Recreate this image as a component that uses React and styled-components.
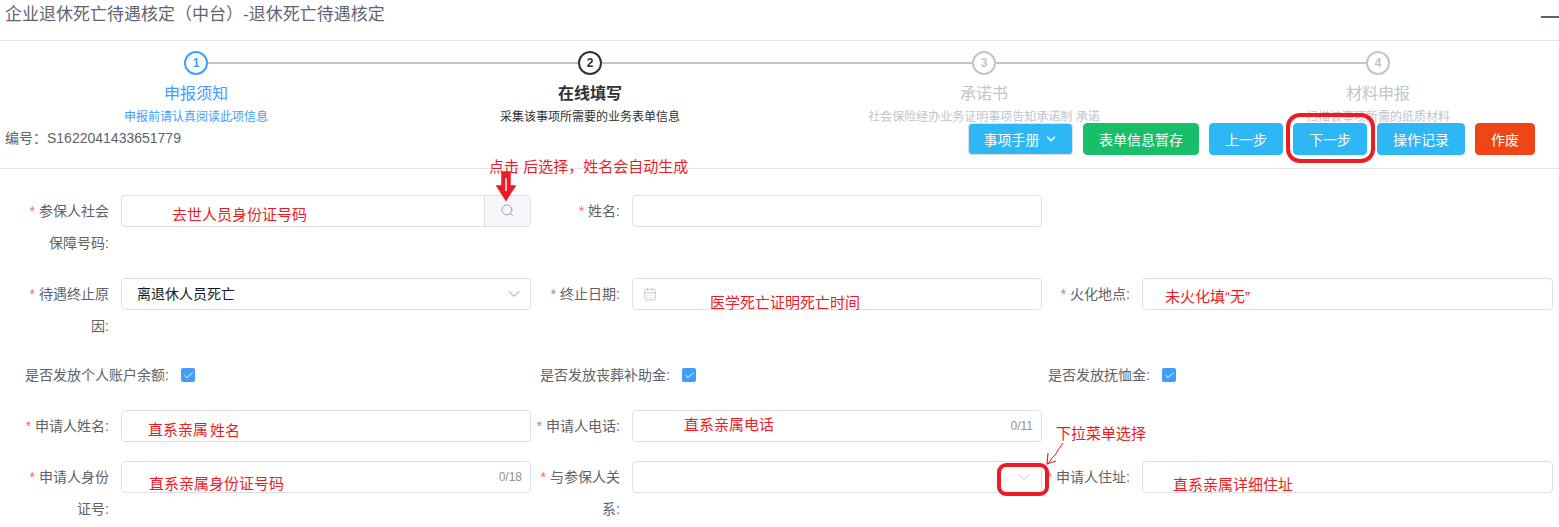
import React from 'react';
import styled, { createGlobalStyle } from 'styled-components';
import { CalendarDays, Check, ChevronDown, Search } from 'lucide-react';

const GlobalStyle = createGlobalStyle`
  html, body {
    margin: 0;
    padding: 0;
    background: #fff;
  }
  body {
    font-family: "Liberation Sans", "Noto Sans CJK SC", sans-serif;
    font-size: 14px;
    color: #606266;
  }
`;

const Page = styled.div`
  position: relative;
  width: 1559px;
  height: 527px;
  overflow: hidden;
  background: #fff;
`;

const TitleBar = styled.header`
  display: flex;
  justify-content: space-between;
  box-sizing: border-box;
  height: 41px;
  padding-left: 5px;
  border-bottom: 1px solid #e6e6e6;
`;

const Title = styled.h1`
  margin: 0;
  font-size: 17px;
  font-weight: 400;
  line-height: 29px;
  color: #5f6470;
`;

const Minimize = styled.span`
  width: 18px;
  height: 2px;
  margin-top: 16px;
  background: #5a6478;
`;

const Head = styled.section`
  box-sizing: border-box;
  height: 128px;
  padding-top: 10px;
  border-bottom: 1px solid #e6e6e6;
`;

const Steps = styled.div`
  display: flex;
  margin-left: -1px;
`;

const stepColor = { done: '#409eff', current: '#303133', wait: '#c0c4cc' };

const Step = styled.div`
  position: relative;
  flex: 0 0 394px;
  display: flex;
  flex-direction: column;
  align-items: center;
  color: ${(p) => stepColor[p.$state]};

  &:not(:last-child)::after {
    content: '';
    position: absolute;
    top: 11px;
    left: 209px;
    width: 370px;
    height: 2px;
    background: #c0c4d0;
  }
`;

const Circle = styled.span`
  display: flex;
  align-items: center;
  justify-content: center;
  box-sizing: border-box;
  width: 24px;
  height: 24px;
  border: 2px solid ${(p) => stepColor[p.$state]};
  border-radius: 50%;
  font-size: 12px;
  font-weight: 700;
`;

const StepTitle = styled.div`
  margin-top: 7px;
  font-size: 16px;
  line-height: 24px;
  font-weight: ${(p) => (p.$state === 'current' ? 700 : 400)};
`;

const StepDesc = styled.div`
  margin-top: 2px;
  font-size: 12px;
  line-height: 18px;
  white-space: nowrap;
`;

const MetaRow = styled.div`
  position: relative;
  display: flex;
  justify-content: space-between;
  margin-top: -3px;
  padding: 0 24px 0 5px;
`;

const Serial = styled.div`
  margin-top: 5px;
  line-height: 20px;
  color: #606266;
`;

const Actions = styled.div`
  display: flex;
  gap: 10px;
`;

const actionColor = { info: '#2db7f5', success: '#19be6b', danger: '#f04516' };

const Action = styled.button`
  display: flex;
  align-items: center;
  justify-content: center;
  gap: 4px;
  box-sizing: border-box;
  width: ${(p) => p.$width}px;
  height: 32px;
  padding: 0;
  border: 1px solid ${(p) => (p.$outlined ? '#dcdee2' : actionColor[p.$kind])};
  border-radius: 4px;
  background: ${(p) => actionColor[p.$kind]};
  color: #fff;
  font: inherit;
  font-size: 14px;
`;

const Form = styled.form`
  padding: 26px 6px 0 21px;
`;

const Row = styled.div`
  display: grid;
  grid-template-columns: 511px 510px 511px;
  margin-top: ${(p) => p.$top ?? 19}px;

  &:first-child {
    margin-top: 0;
  }
`;

const Field = styled.div`
  display: flex;
  align-items: flex-start;

  &:first-child {
    padding-right: 1px;
  }
`;

const Label = styled.label`
  flex: 0 0 ${(p) => p.$width ?? 100}px;
  box-sizing: border-box;
  padding-right: 12px;
  text-align: right;
  line-height: 32px;
  color: #606266;
`;

const Star = styled.span`
  margin-right: 4px;
  color: #f56c6c;
  font-family: "Liberation Sans", sans-serif;
`;

const Box = styled.div`
  flex: 1;
  display: flex;
  align-items: center;
  justify-content: space-between;
  box-sizing: border-box;
  height: 32px;
  padding: ${(p) => p.$padding ?? '0 8px'};
  border: 1px solid #dcdfe6;
  border-radius: 4px;
  background: #fff;
`;

const SelectValue = styled.span`
  margin-top: -3px;
  color: #1a1a1a;
`;

const Group = styled.div`
  flex: 1;
  display: flex;
  height: 32px;
`;

const GroupInput = styled.div`
  flex: 1;
  box-sizing: border-box;
  border: 1px solid #dcdfe6;
  border-right: 0;
  border-radius: 4px 0 0 4px;
`;

const GroupAppend = styled.div`
  display: flex;
  align-items: center;
  justify-content: center;
  box-sizing: border-box;
  width: 47px;
  padding-bottom: 2px;
  border: 1px solid #dcdfe6;
  border-radius: 0 4px 4px 0;
  background: #f5f7fa;
  color: #909399;
`;

const Counter = styled.span`
  margin-left: auto;
  font-size: 12px;
  color: #909399;
`;

const Tick = styled.span`
  display: flex;
  align-items: center;
  justify-content: center;
  width: 14px;
  height: 14px;
  margin-top: 9px;
  border-radius: 2px;
  background: #409eff;
  color: #fff;
`;

const Note = styled.div`
  position: absolute;
  left: ${(p) => p.$x}px;
  top: ${(p) => p.$y}px;
  font-size: 15px;
  line-height: 20px;
  color: #ed1c24;
  white-space: nowrap;
`;

const Ring = styled.div`
  position: absolute;
  left: ${(p) => p.$x}px;
  top: ${(p) => p.$y}px;
  box-sizing: border-box;
  width: ${(p) => p.$w}px;
  height: ${(p) => p.$h}px;
  border: 4px solid #ed1c24;
  border-radius: ${(p) => p.$radius}px;
`;

const Drawing = styled.svg`
  position: absolute;
  left: ${(p) => p.$x}px;
  top: ${(p) => p.$y}px;
`;

const steps = [
  { n: 1, state: 'done', title: '申报须知', desc: '申报前请认真阅读此项信息' },
  { n: 2, state: 'current', title: '在线填写', desc: '采集该事项所需要的业务表单信息' },
  { n: 3, state: 'wait', title: '承诺书', desc: '社会保险经办业务证明事项告知承诺制 承诺' },
  { n: 4, state: 'wait', title: '材料申报', desc: '扫描该事项所需的纸质材料' },
];

const notes = [
  { x: 489, y: 157, text: '点击 后选择，姓名会自动生成' },
  { x: 172, y: 205, text: '去世人员身份证号码' },
  { x: 710, y: 293, text: '医学死亡证明死亡时间' },
  { x: 1165, y: 287, text: '未火化填“无”' },
  { x: 148, y: 420, text: '直系亲属' },
  { x: 210, y: 421, text: '姓名' },
  { x: 684, y: 415, text: '直系亲属电话' },
  { x: 149, y: 474, text: '直系亲属身份证号码' },
  { x: 1056, y: 424, text: '下拉菜单选择' },
  { x: 1173, y: 475, text: '直系亲属详细住址' },
];

const Req = ({ children, width }) => (
  <Label $width={width}>
    <Star>*</Star>
    {children}
  </Label>
);

const CheckField = ({ label, width }) => (
  <Field>
    <Label $width={width}>{label}</Label>
    <Tick>
      <Check size={11} strokeWidth={2} />
    </Tick>
  </Field>
);

const App = () => {
  return (
    <Page>
      <GlobalStyle />
      <TitleBar>
        <Title>企业退休死亡待遇核定（中台）-退休死亡待遇核定</Title>
        <Minimize />
      </TitleBar>

      <Head>
        <Steps>
          {steps.map((s) => (
            <Step key={s.n} $state={s.state}>
              <Circle $state={s.state}>{s.n}</Circle>
              <StepTitle $state={s.state}>{s.title}</StepTitle>
              <StepDesc>{s.desc}</StepDesc>
            </Step>
          ))}
        </Steps>
        <MetaRow>
          <Serial>编号：S1622041433651779</Serial>
          <Actions>
            <Action type="button" $kind="info" $width={105} $outlined>
              事项手册 <ChevronDown size={14} strokeWidth={2.5} />
            </Action>
            <Action type="button" $kind="success" $width={116}>表单信息暂存</Action>
            <Action type="button" $kind="info" $width={74}>上一步</Action>
            <Action type="button" $kind="info" $width={74}>下一步</Action>
            <Action type="button" $kind="info" $width={88}>操作记录</Action>
            <Action type="button" $kind="danger" $width={60}>作废</Action>
          </Actions>
        </MetaRow>
      </Head>

      <Form>
        <Row>
          <Field>
            <Req>参保人社会保障号码:</Req>
            <Group>
              <GroupInput />
              <GroupAppend>
                <Search size={15} strokeWidth={1.4} />
              </GroupAppend>
            </Group>
          </Field>
          <Field>
            <Req>姓名:</Req>
            <Box />
          </Field>
        </Row>

        <Row>
          <Field>
            <Req>待遇终止原因:</Req>
            <Box $padding="0 6px 0 15px">
              <SelectValue>离退休人员死亡</SelectValue>
              <ChevronDown size={20} color="#909399" strokeWidth={1.2} />
            </Box>
          </Field>
          <Field>
            <Req>终止日期:</Req>
            <Box $padding="0 0 0 10px">
              <CalendarDays size={14} color="#c0c4cc" strokeWidth={1.5} />
            </Box>
          </Field>
          <Field>
            <Req>火化地点:</Req>
            <Box />
          </Field>
        </Row>

        <Row $top={17}>
          <CheckField label="是否发放个人账户余额:" width={160} />
          <CheckField label="是否发放丧葬补助金:" width={150} />
          <CheckField label="是否发放抚恤金:" width={120} />
        </Row>

        <Row>
          <Field>
            <Req>申请人姓名:</Req>
            <Box />
          </Field>
          <Field>
            <Req>申请人电话:</Req>
            <Box>
              <Counter>0/11</Counter>
            </Box>
          </Field>
        </Row>

        <Row>
          <Field>
            <Req>申请人身份证号:</Req>
            <Box>
              <Counter>0/18</Counter>
            </Box>
          </Field>
          <Field>
            <Req>与参保人关系:</Req>
            <Box $padding="0 7px 0 15px">
              <span />
              <ChevronDown size={20} color="#c0c4cc" strokeWidth={1.2} />
            </Box>
          </Field>
          <Field>
            <Req>申请人住址:</Req>
            <Box />
          </Field>
        </Row>
      </Form>

      {notes.map((n) => (
        <Note key={n.text} $x={n.x} $y={n.y}>{n.text}</Note>
      ))}

      <Ring $x={1286} $y={113} $w={89} $h={50} $radius={14} />
      <Ring $x={997} $y={463} $w={52} $h={33} $radius={9} />

      {/* arrow pointing at the search button */}
      <Drawing $x={495} $y={170} width="22" height="32" viewBox="0 0 22 32">
        <path d="M7 2h8v14h5L11 30 2 16h5z" fill="#ed1c24" stroke="#ed1c24" strokeWidth="1.5" />
        <path d="M11 8v13" stroke="#fff" strokeWidth="1.5" />
      </Drawing>

      {/* thin arrow from the dropdown note */}
      <Drawing $x={1042} $y={440} width="26" height="28" viewBox="0 0 26 28" fill="none">
        <path d="M21 3l-5 7-2 4-4 4-4 6" stroke="#ed1c24" strokeWidth="1" />
        <path d="M6 13L5 24l9-3" stroke="#ed1c24" strokeWidth="1.2" />
      </Drawing>
    </Page>
  );
};

export default App;
